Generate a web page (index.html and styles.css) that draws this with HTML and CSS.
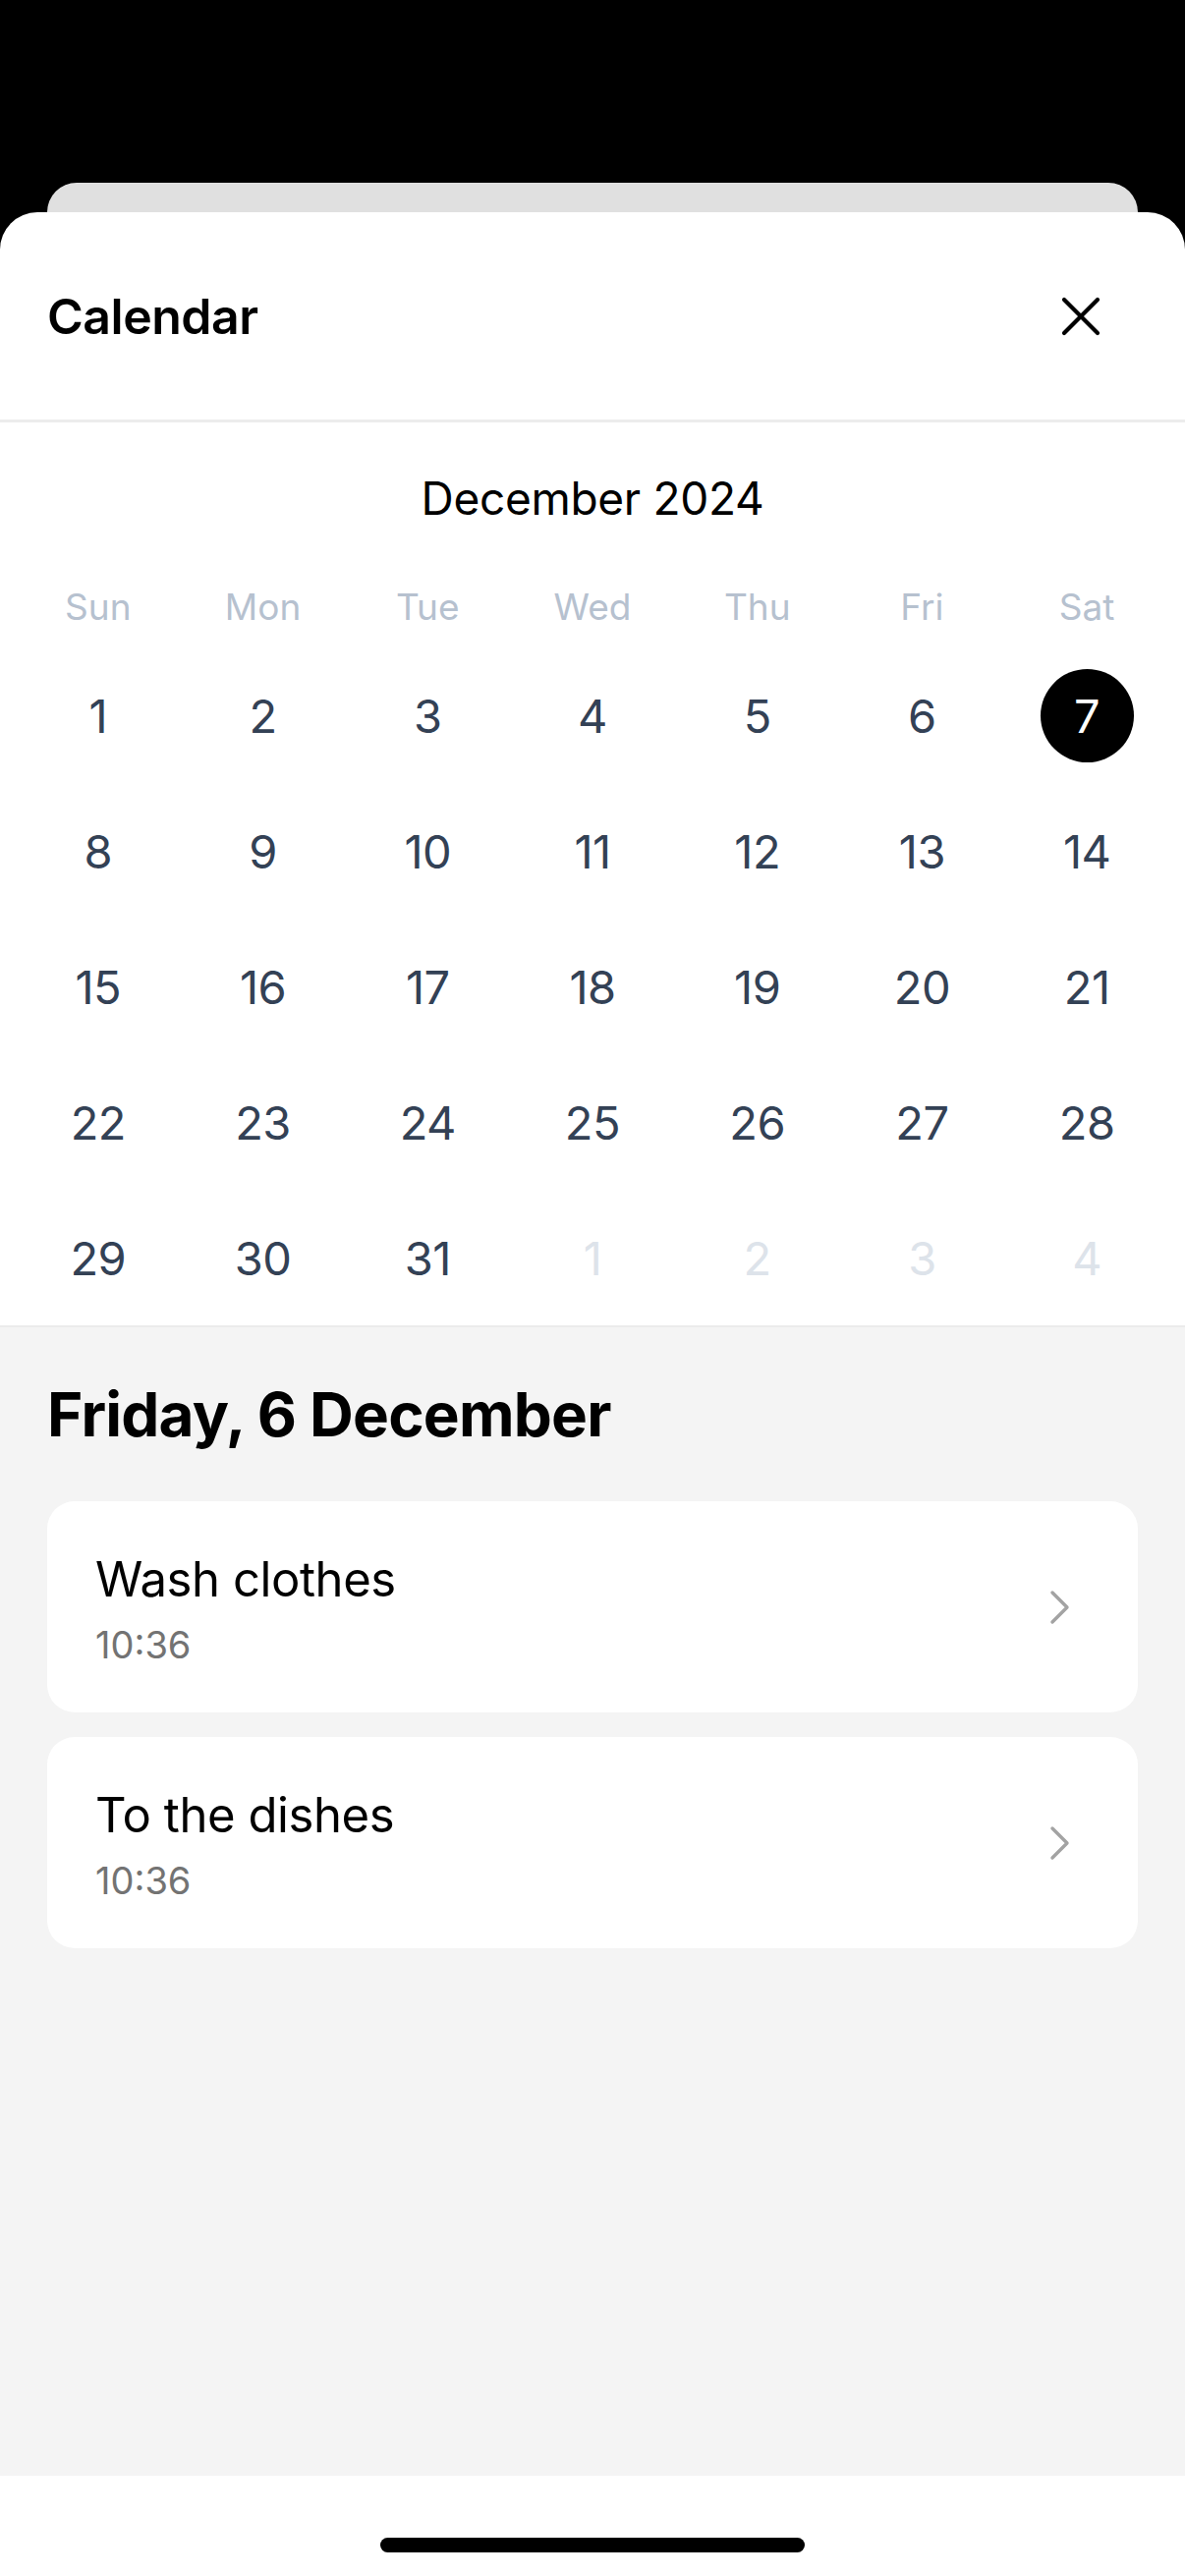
FILE: index.html
```html
<!DOCTYPE html>
<html lang="en">
<head>
<meta charset="utf-8">
<title>Calendar</title>
<link rel="stylesheet" href="styles.css">
</head>
<body>
<div class="screen">
  <div class="backcard"></div>
  <div class="sheet">
    <header class="sheet-header">
      <h1 class="sheet-title">Calendar</h1>
      <button class="close-btn" aria-label="Close">
        <svg width="40" height="40" viewBox="0 0 40 40"><path d="M3 3 L37 37 M37 3 L3 37" stroke="#000" stroke-width="4.2" stroke-linecap="round" fill="none"/></svg>
      </button>
    </header>
    <section class="calendar">
      <div class="month">December 2024</div>
      <div class="weekdays">
        <span>Sun</span><span>Mon</span><span>Tue</span><span>Wed</span><span>Thu</span><span>Fri</span><span>Sat</span>
      </div>
      <div class="days">
        <span class="day">1</span><span class="day">2</span><span class="day">3</span><span class="day">4</span><span class="day">5</span><span class="day">6</span><span class="day selected"><span class="dot">7</span></span>
        <span class="day">8</span><span class="day">9</span><span class="day">10</span><span class="day">11</span><span class="day">12</span><span class="day">13</span><span class="day">14</span>
        <span class="day">15</span><span class="day">16</span><span class="day">17</span><span class="day">18</span><span class="day">19</span><span class="day">20</span><span class="day">21</span>
        <span class="day">22</span><span class="day">23</span><span class="day">24</span><span class="day">25</span><span class="day">26</span><span class="day">27</span><span class="day">28</span>
        <span class="day">29</span><span class="day">30</span><span class="day">31</span><span class="day muted">1</span><span class="day muted">2</span><span class="day muted">3</span><span class="day muted">4</span>
      </div>
    </section>
    <section class="agenda">
      <h2 class="agenda-date">Friday, 6 December</h2>
      <div class="task">
        <div class="task-text">
          <div class="task-title">Wash clothes</div>
          <div class="task-time">10:36</div>
        </div>
        <svg class="chev" width="24" height="36" viewBox="0 0 24 36"><path d="M4 3 L19 18 L4 33" stroke="#a3a3a3" stroke-width="3.4" stroke-linecap="round" stroke-linejoin="round" fill="none"/></svg>
      </div>
      <div class="task">
        <div class="task-text">
          <div class="task-title">To the dishes</div>
          <div class="task-time">10:36</div>
        </div>
        <svg class="chev" width="24" height="36" viewBox="0 0 24 36"><path d="M4 3 L19 18 L4 33" stroke="#a3a3a3" stroke-width="3.4" stroke-linecap="round" stroke-linejoin="round" fill="none"/></svg>
      </div>
    </section>
    <footer class="home-area">
      <div class="home-indicator"></div>
    </footer>
  </div>
</div>
</body>
</html>
```

FILE: styles.css
```css
* { box-sizing: border-box; }
html, body { margin: 0; padding: 0; }
body {
  background: #000;
  font-family: Inter, "Noto Sans", "Liberation Sans", sans-serif;
  color: #000;
}
.screen {
  width: 1206px;
  height: 2622px;
  padding-top: 186px;
  display: flex;
  flex-direction: column;
  overflow: hidden;
}
.backcard {
  height: 30px;
  margin: 0 48px;
  background: #e0e0e0;
  border-radius: 30px 30px 0 0;
  flex: none;
}
.sheet {
  flex: 1;
  background: #fff;
  border-radius: 38px 38px 0 0;
  display: flex;
  flex-direction: column;
  overflow: hidden;
}
.sheet-header {
  height: 211px;
  flex: none;
  display: flex;
  align-items: center;
  justify-content: space-between;
  padding: 0 68px 0 48px;
  border-bottom: 3px solid #ececec;
  box-sizing: content-box;
}
.sheet-title {
  margin: 0;
  font-size: 50px;
  font-weight: 600;
  letter-spacing: -0.5px;
}
.close-btn {
  width: 76px;
  height: 76px;
  border: 0;
  background: none;
  padding: 0;
  display: flex;
  align-items: center;
  justify-content: center;
}
.calendar {
  flex: none;
  padding: 49px 16px 0;
  border-bottom: 2px solid #ebebeb;
}
.month {
  text-align: center;
  font-size: 46px;
  line-height: 56px;
  font-weight: 400;
  letter-spacing: -0.3px;
}
.weekdays {
  margin-top: 54px;
  display: grid;
  grid-template-columns: repeat(7, 1fr);
  height: 56px;
  align-items: center;
  text-align: center;
  font-size: 37px;
  color: #b6c1cf;
}
.days {
  margin-top: 14px;
  display: grid;
  grid-template-columns: repeat(7, 1fr);
  grid-auto-rows: 138px;
}
.day {
  display: flex;
  align-items: center;
  justify-content: center;
  font-size: 47px;
  font-weight: 400;
  color: #334155;
  letter-spacing: -0.5px;
}
.day.muted { color: #dde3ea; }
.dot {
  width: 95px;
  height: 95px;
  border-radius: 50%;
  background: #000;
  color: #fff;
  display: flex;
  align-items: center;
  justify-content: center;
}
.agenda {
  flex: 1;
  background: #f4f4f4;
  padding: 53px 48px 0;
}
.agenda-date {
  margin: 0 0 52px;
  font-size: 62px;
  line-height: 72px;
  font-weight: 700;
  letter-spacing: -0.8px;
}
.task {
  height: 215px;
  background: #fff;
  border-radius: 28px;
  display: flex;
  align-items: center;
  justify-content: space-between;
  padding: 0 67px 0 49px;
  margin-bottom: 25px;
}
.task-text {
  display: flex;
  flex-direction: column;
  gap: 15px;
  padding-top: 4px;
}
.task-title {
  font-size: 49px;
  line-height: 58px;
  letter-spacing: -0.4px;
}
.task-time {
  font-size: 38px;
  line-height: 44px;
  color: #737373;
}
.chev { flex: none; }
.home-area {
  height: 102px;
  flex: none;
  background: #fff;
  display: flex;
  justify-content: center;
  padding-top: 63px;
}
.home-indicator {
  width: 432px;
  height: 15px;
  border-radius: 8px;
  background: #000;
}
```
